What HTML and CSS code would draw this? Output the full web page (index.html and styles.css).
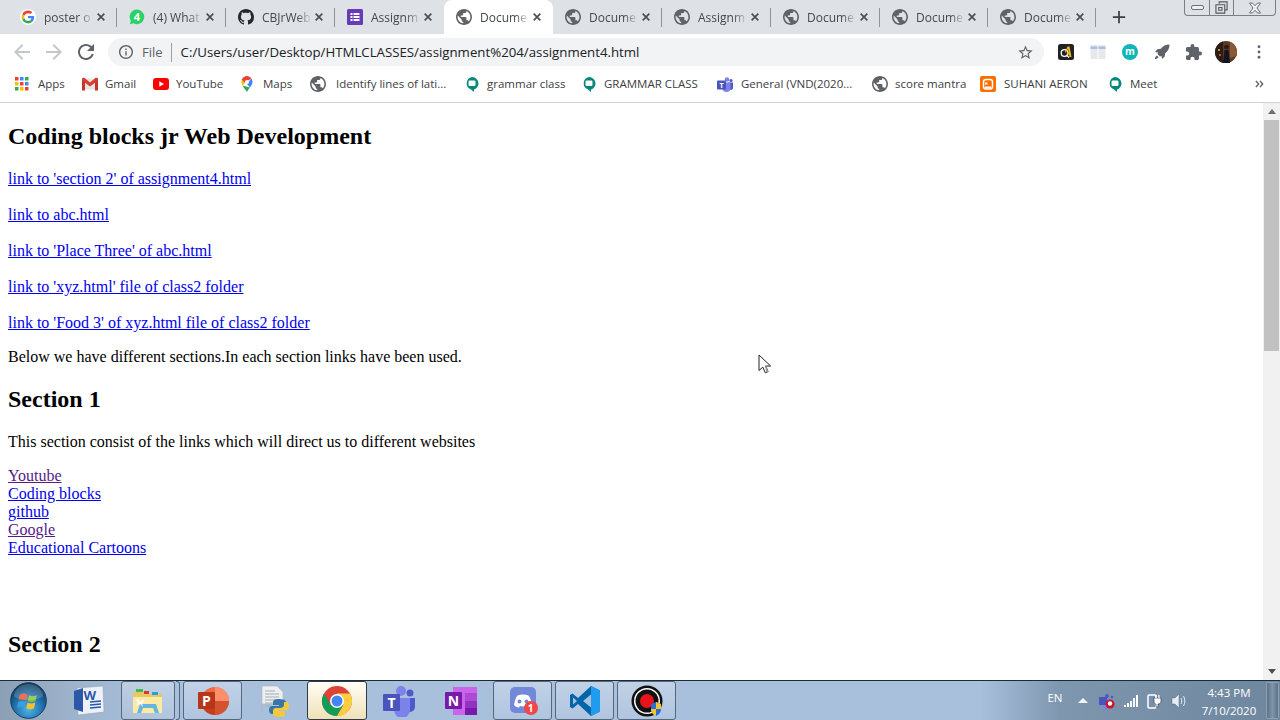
FILE: index.html
```html
<!DOCTYPE html>
<html lang="en">
<head>
<meta charset="utf-8">
<title>Document</title>
<link rel="stylesheet" href="styles.css">
</head>
<body>
<svg class="defs" aria-hidden="true">
  <symbol id="globe" viewBox="2 2 20 20"><path fill="#5f6368" d="M12 2C6.48 2 2 6.48 2 12s4.480 10 10 10 10-4.480 10-10S17.520 2 12 2zm-1 17.930c-3.950-.490-7-3.850-7-7.930 0-.620.080-1.210.210-1.790L9 15v1c0 1.100.900 2 2 2v1.930zm6.900-2.540c-.260-.810-1-1.390-1.900-1.390h-1v-3c0-.550-.450-1-1-1H8v-2h2c.550 0 1-.450 1-1V7h2c1.100 0 2-.900 2-2v-.410c2.930 1.190 5 4.060 5 7.410 0 2.080-.800 3.970-2.100 5.390z"/></symbol>
  <symbol id="close" viewBox="0 0 12 12"><path stroke="#4a4d52" stroke-width="2" d="M2 2l8 8M10 2l-8 8"/></symbol>
  <symbol id="meet" viewBox="0 0 16 16"><path fill="#00897b" d="M7 1a6.500 6.500 0 0 1 6.500 6.500c0 3-2 5.300-4.500 6V16l-3-2.500A6.500 6.500 0 0 1 7 1z"/><rect x="3.500" y="4.500" width="7" height="5.500" rx="1.200" fill="#fff"/></symbol>
</svg>

<header class="tabstrip">
  <div class="tab">
    <svg class="favicon" viewBox="-6 -6 60 60"><circle cx="24" cy="24" r="30" fill="#fff"/><path fill="#EA4335" d="M24 9.500c3.540 0 6.710 1.220 9.210 3.600l6.850-6.850C35.900 2.380 30.470 0 24 0 14.620 0 6.510 5.380 2.560 13.220l7.980 6.190C12.430 13.720 17.740 9.500 24 9.500z"/><path fill="#4285F4" d="M46.980 24.550c0-1.570-.150-3.090-.380-4.550H24v9.020h12.940c-.580 2.960-2.260 5.480-4.780 7.180l7.730 6c4.510-4.180 7.090-10.360 7.090-17.650z"/><path fill="#FBBC05" d="M10.530 28.590c-.500-1.450-.760-2.990-.760-4.590s.270-3.140.760-4.590l-7.980-6.190C.920 16.460 0 20.120 0 24c0 3.880.920 7.540 2.560 10.780l7.970-6.190z"/><path fill="#34A853" d="M24 48c6.480 0 11.930-2.130 15.890-5.810l-7.730-6c-2.150 1.450-4.920 2.300-8.160 2.300-6.260 0-11.570-4.220-13.470-9.910l-7.980 6.190C6.510 42.620 14.620 48 24 48z"/></svg>
    <span class="tab-title">poster o</span>
    <svg class="tab-close"><use href="#close"/></svg>
  </div>
  <div class="tab">
    <svg class="favicon" viewBox="0 0 16 16"><path fill="#25d366" d="M8 .500a7.300 7.300 0 1 1-3.600 13.700L.800 15.300l1.100-3.500A7.300 7.300 0 0 1 8 .500z"/><text x="8" y="12" class="badge-digit">4</text></svg>
    <span class="tab-title">(4) What</span>
    <svg class="tab-close"><use href="#close"/></svg>
  </div>
  <div class="tab">
    <svg class="favicon" viewBox="0 0 16 16"><path fill="#24292e" d="M8 0C3.580 0 0 3.580 0 8c0 3.540 2.290 6.530 5.470 7.590.400.070.550-.170.550-.380 0-.190-.010-.820-.010-1.490-2.010.370-2.530-.490-2.690-.940-.090-.230-.480-.940-.820-1.130-.280-.150-.680-.520-.010-.530.630-.010 1.080.580 1.230.820.720 1.210 1.870.870 2.330.660.070-.520.280-.870.510-1.070-1.780-.200-3.640-.890-3.640-3.950 0-.870.310-1.590.820-2.150-.080-.200-.360-1.020.080-2.120 0 0 .670-.210 2.200.820.640-.180 1.320-.270 2-.270.680 0 1.360.090 2 .270 1.530-1.040 2.200-.820 2.200-.820.440 1.100.160 1.920.080 2.120.510.560.820 1.270.820 2.150 0 3.070-1.870 3.750-3.650 3.950.290.250.540.730.540 1.480 0 1.070-.010 1.930-.010 2.200 0 .210.150.460.550.380A8.013 8.013 0 0 0 16 8c0-4.420-3.580-8-8-8z"/></svg>
    <span class="tab-title">CBJrWeb</span>
    <svg class="tab-close"><use href="#close"/></svg>
  </div>
  <div class="tab">
    <svg class="favicon" viewBox="0 0 16 16"><rect width="16" height="16" rx="1.500" fill="#673ab7"/><path fill="#fff" d="M3.500 4h2v2h-2zM6.500 4h6v2h-6zM3.500 7h2v2h-2zM6.500 7h6v2h-6zM3.500 10h2v2h-2zM6.500 10h6v2h-6z"/></svg>
    <span class="tab-title">Assignm</span>
    <svg class="tab-close"><use href="#close"/></svg>
  </div>
  <div class="tab tab-active">
    <svg class="favicon"><use href="#globe"/></svg>
    <span class="tab-title">Docume</span>
    <svg class="tab-close"><use href="#close"/></svg>
  </div>
  <div class="tab">
    <svg class="favicon"><use href="#globe"/></svg>
    <span class="tab-title">Docume</span>
    <svg class="tab-close"><use href="#close"/></svg>
  </div>
  <div class="tab">
    <svg class="favicon"><use href="#globe"/></svg>
    <span class="tab-title">Assignm</span>
    <svg class="tab-close"><use href="#close"/></svg>
  </div>
  <div class="tab">
    <svg class="favicon"><use href="#globe"/></svg>
    <span class="tab-title">Docume</span>
    <svg class="tab-close"><use href="#close"/></svg>
  </div>
  <div class="tab">
    <svg class="favicon"><use href="#globe"/></svg>
    <span class="tab-title">Docume</span>
    <svg class="tab-close"><use href="#close"/></svg>
  </div>
  <div class="tab">
    <svg class="favicon"><use href="#globe"/></svg>
    <span class="tab-title">Docume</span>
    <svg class="tab-close"><use href="#close"/></svg>
  </div>
  <svg class="new-tab" viewBox="0 0 16 16"><path stroke="#3c4043" stroke-width="2" d="M8 1v14M1 8h14"/></svg>
  <div class="win-controls">
    <div class="win-btn win-min"><span class="min-glyph"></span></div>
    <div class="win-btn win-max">
      <svg class="win-glyph" viewBox="0 0 14 14"><path fill="none" stroke="#55585c" stroke-width="1.200" d="M4.500 3V1h8.500v8.500h-2.500M1 4h9.500v9H1zM4 7h3.500v3H4z"/></svg>
    </div>
    <div class="win-btn win-close">
      <svg class="win-glyph-x" viewBox="0 0 14 12"><path fill="#eef0f2" stroke="#6d7074" d="M1.500 1H4.500L7 3.700 9.500 1h3L9 6l3.500 5h-3L7 8.300 4.500 11h-3L5 6z"/></svg>
    </div>
  </div>
</header>

<nav class="toolbar">
  <svg class="tool-btn" viewBox="0 0 24 24"><path fill="#c4c7cb" d="M20 11H7.830l5.590-5.590L12 4l-8 8 8 8 1.410-1.410L7.830 13H20v-2z"/></svg>
  <svg class="tool-btn" viewBox="0 0 24 24"><path fill="#c4c7cb" d="M4 11h12.170l-5.590-5.590L12 4l8 8-8 8-1.410-1.410L16.170 13H4v-2z"/></svg>
  <svg class="tool-btn" viewBox="0 0 24 24"><path fill="#5f6368" d="M17.650 6.350C16.200 4.900 14.210 4 12 4c-4.420 0-7.990 3.580-7.990 8s3.570 8 7.990 8c3.730 0 6.840-2.550 7.730-6h-2.080c-.820 2.330-3.040 4-5.650 4-3.310 0-6-2.690-6-6s2.690-6 6-6c1.660 0 3.140.690 4.220 1.780L13 11h7V4l-2.350 2.350z"/></svg>
  <div class="omnibox">
    <svg class="info" viewBox="2 2 20 20"><path fill="#5f6368" d="M11 7h2v2h-2zm0 4h2v6h-2zm1-9C6.480 2 2 6.480 2 12s4.480 10 10 10 10-4.480 10-10S17.520 2 12 2zm0 18c-4.410 0-8-3.590-8-8s3.590-8 8-8 8 3.590 8 8-3.590 8-8 8z"/></svg>
    <span class="scheme">File</span>
    <span class="omni-sep"></span>
    <span class="url">C:/Users/user/Desktop/HTMLCLASSES/assignment%204/assignment4.html</span>
    <svg class="star" viewBox="0 0 24 24"><path fill="#5f6368" d="M22 9.240l-7.190-.620L12 2 9.190 8.630 2 9.240l5.460 4.730L5.820 21 12 17.270 18.180 21l-1.630-7.030L22 9.240zM12 15.400l-3.760 2.270 1-4.280-3.320-2.880 4.380-.380L12 6.100l1.710 4.040 4.380.380-3.320 2.880 1 4.280L12 15.400z"/></svg>
  </div>
  <div class="extensions">
    <svg class="ext" viewBox="0 0 16 16"><rect width="16" height="16" rx="2.500" fill="#1f2326"/><circle cx="6.500" cy="9" r="3.300" fill="none" stroke="#fff" stroke-width="1.300"/><path fill="#f5b81f" d="M9.500 2.500h2l2 10.500h-2l-.4-2.500H8.500l.6-2h1.600L10 4.500 7.800 9 7 7.500z"/><path stroke="#fff" stroke-width="1.300" d="M9 11.500l2 2"/></svg>
    <svg class="ext" viewBox="0 0 16 16"><rect x=".500" y="1" width="7" height="14" fill="#e6e8eb"/><rect x="8.500" y="1" width="7" height="14" fill="#e6e8eb"/><rect x=".500" y="2.500" width="7" height="2.500" fill="#a9bfe0"/><rect x="8.500" y="2.500" width="7" height="2.500" fill="#a9bfe0"/></svg>
    <svg class="ext" viewBox="0 0 16 16"><circle cx="8" cy="8" r="8" fill="#0fb5b7"/><text x="8" y="11" class="ext-m">m</text></svg>
    <svg class="ext" viewBox="0 0 16 16"><path fill="#5f6368" d="M15.500.500c-3.800 0-6.600 1.500-8.700 4.300L3.400 5.300 1 8l3.200.500-.7 1.500 2.500 2.500 1.500-.700L8 15l2.700-2.400.500-3.400c2.800-2.100 4.300-4.900 4.300-8.700zM3 11.500C1.800 12 1 13.500.800 15.200 2.500 15 4 14.200 4.500 13z"/></svg>
    <svg class="ext" viewBox="2 1 21 21"><path fill="#5f6368" d="M20.500 11H19V7c0-1.100-.900-2-2-2h-4V3.500C13 2.120 11.880 1 10.500 1S8 2.120 8 3.500V5H4c-1.100 0-1.990.900-1.990 2v3.800H3.500c1.490 0 2.700 1.210 2.700 2.700s-1.210 2.700-2.700 2.700H2V20c0 1.100.900 2 2 2h3.800v-1.500c0-1.490 1.210-2.700 2.700-2.700 1.490 0 2.700 1.210 2.700 2.700V22H17c1.100 0 2-.900 2-2v-4h1.500c1.380 0 2.500-1.120 2.500-2.500S21.880 11 20.500 11z"/></svg>
    <svg class="avatar" viewBox="0 0 22 22"><circle cx="11" cy="11" r="11" fill="#5b3a26"/><path fill="#2b1c14" d="M0 11A11 11 0 0 1 8 .500V22A11 11 0 0 1 0 11z"/><path fill="#8a5a34" d="M15 1a11 11 0 0 1 7 10v4l-7 2z"/><path fill="#14161f" d="M8 22l1.500-13h4L15 22z"/><circle cx="11.500" cy="6" r="2.300" fill="#2a1a12"/><circle cx="4" cy="9" r="1" fill="#d0c060"/><circle cx="5" cy="14" r="1" fill="#c07050"/></svg>
    <svg class="dots" viewBox="0 0 4 16"><circle cx="2" cy="2" r="1.600" fill="#5f6368"/><circle cx="2" cy="8" r="1.600" fill="#5f6368"/><circle cx="2" cy="14" r="1.600" fill="#5f6368"/></svg>
  </div>
</nav>

<nav class="bookmarks">
  <a class="bm">
    <svg class="bm-icon bm-apps" viewBox="0 0 14 14"><path fill="#ea4335" d="M0 0h3.500v3.500H0z"/><path fill="#4285f4" d="M5 0h3.500v3.500H5z"/><path fill="#34a853" d="M10 0h3.500v3.500H10z"/><path fill="#fbbc05" d="M0 5h3.500v3.500H0z"/><path fill="#ea4335" d="M5 5h3.500v3.500H5z"/><path fill="#4285f4" d="M10 5h3.500v3.500H10z"/><path fill="#34a853" d="M0 10h3.500v3.500H0z"/><path fill="#fbbc05" d="M5 10h3.500v3.500H5z"/><path fill="#ea4335" d="M10 10h3.500v3.500H10z"/></svg>
    <span>Apps</span>
  </a>
  <a class="bm">
    <svg class="bm-icon" viewBox="0 0 16 13"><path fill="#e5e5e5" d="M1 1h14v11H1z"/><path fill="#c5352b" d="M0 1h3v12H0zM13 1h3v12h-3z"/><path fill="#d93c30" d="M0 1l2-1 6 5 6-5 2 1v2L8 9 0 3z"/></svg>
    <span>Gmail</span>
  </a>
  <a class="bm">
    <svg class="bm-icon" viewBox="0 0 16 12"><rect width="16" height="12" rx="3" fill="#f00"/><path fill="#fff" d="M6.300 3.300L11 6l-4.700 2.700z"/></svg>
    <span>YouTube</span>
  </a>
  <a class="bm">
    <svg class="bm-icon bm-tight" viewBox="2 0 12 16"><path fill="#34a853" d="M1.200 9.500L6 16c.900-2 2-3.300 3-4.600z"/><path fill="#fbbc05" d="M.700 4C.200 6 .500 7.600 1.200 9.500L6 5.500z"/><path fill="#4285f4" d="M11.500 6c0-1.300-.500-2.500-1.300-3.500L6 8l3 3.400C10.500 9.500 11.500 8 11.500 6z"/><path fill="#ea4335" d="M6 0C3.800 0 1.800 1.300.700 3.700l3.500 2.800L10.400 2.600C9.300 1 7.800 0 6 0z"/><circle cx="6" cy="6" r="2" fill="#fff"/></svg>
    <span>Maps</span>
  </a>
  <a class="bm">
    <svg class="bm-icon bm-widest"><use href="#globe"/></svg>
    <span>Identify lines of lati...</span>
  </a>
  <a class="bm">
    <svg class="bm-icon bm-tight"><use href="#meet"/></svg>
    <span>grammar class</span>
  </a>
  <a class="bm">
    <svg class="bm-icon bm-tight"><use href="#meet"/></svg>
    <span>GRAMMAR CLASS</span>
  </a>
  <a class="bm">
    <svg class="bm-icon bm-wide" viewBox="0 0 16 16"><circle cx="10" cy="3.500" r="2.300" fill="#7b83eb"/><circle cx="14" cy="4.500" r="1.600" fill="#5059c9"/><path fill="#5059c9" d="M11 6.500h5v5a2.500 2.500 0 0 1-5 0z"/><path fill="#7b83eb" d="M5 6.500h8.500V12a4 4 0 0 1-8 0z"/><rect y="4.500" width="9" height="9" rx="1" fill="#4b53bc"/><text x="4.500" y="12" class="teams-t">T</text></svg>
    <span>General (VND(2020...</span>
  </a>
  <a class="bm">
    <svg class="bm-icon"><use href="#globe"/></svg>
    <span>score mantra</span>
  </a>
  <a class="bm">
    <svg class="bm-icon bm-wide" viewBox="0 0 16 16"><rect width="16" height="16" rx="2" fill="#ff6d00"/><path fill="none" stroke="#fff" stroke-width="2" d="M5 11.500h6M5 7.500h2.500"/><rect x="3.500" y="3.500" width="9" height="9.500" rx="2.500" fill="none" stroke="#fff" stroke-width="1.500"/></svg>
    <span>SUHANI AERON</span>
  </a>
  <a class="bm">
    <svg class="bm-icon bm-tight"><use href="#meet"/></svg>
    <span>Meet</span>
  </a>
  <svg class="bm-more" viewBox="0 0 10 8"><path fill="none" stroke="#5f6368" stroke-width="1.600" d="M1 .500L4 4 1 7.500M5.500 .500L8.500 4l-3 3.500"/></svg>
</nav>

<div class="viewport">
  <main class="page">
    <h2>Coding blocks jr Web Development</h2>
    <p class="link-row"><a class="link" href="#s2">link to 'section 2' of assignment4.html</a></p>
    <p class="link-row"><a class="link" href="#abc">link to abc.html</a></p>
    <p class="link-row"><a class="link" href="#three">link to 'Place Three' of abc.html</a></p>
    <p class="link-row"><a class="link" href="#xyz">link to 'xyz.html' file of class2 folder</a></p>
    <p class="link-row"><a class="link" href="#food">link to 'Food 3' of xyz.html file of class2 folder</a></p>
    <p>Below we have different sections.In each section links have been used.</p>
    <h2>Section 1</h2>
    <p>This section consist of the links which will direct us to different websites</p>
    <div class="link-list">
      <a class="link visited" href="#yt">Youtube</a>
      <a class="link" href="#cb">Coding blocks</a>
      <a class="link" href="#gh">github</a>
      <a class="link visited" href="#g">Google</a>
      <a class="link" href="#ec">Educational Cartoons</a>
    </div>
    <h2 class="section-two">Section 2</h2>
  </main>
  <aside class="scrollbar">
    <span class="arrow-up"></span>
    <span class="thumb"></span>
    <span class="arrow-down"></span>
  </aside>
  <svg class="cursor" viewBox="0 0 13 20"><path fill="#fff" stroke="#222" d="M1 1v15.500l3.800-3.400 2.500 5.700 2.800-1.200-2.500-5.600h5z"/><path fill="#9a9a9a" d="M7 12.500h2.500l-1 1.300 1.800 3.700-1.700.7z"/></svg>
</div>

<footer class="taskbar">
  <div class="start">
    <svg class="orb" viewBox="0 0 38 38">
      <defs><radialGradient id="orbg" cx=".5" cy=".75" r=".7"><stop offset="0" stop-color="#4fb3e8"/><stop offset=".6" stop-color="#1c6ca8"/><stop offset="1" stop-color="#0e3a5e"/></radialGradient></defs>
      <circle cx="19" cy="19" r="18.300" fill="url(#orbg)" stroke="#1a3a55"/>
      <path fill="#e8552b" d="M10 13c3-1.500 5.500-1.500 8 0l-1.300 6c-2.500-1.300-5-1.300-8 0z"/>
      <path fill="#86c23c" d="M19.500 13.500c2.500 1.500 5 1.500 8 0l-1.300 6c-3 1.500-5.500 1.500-8 0z"/>
      <path fill="#3a9ee0" d="M8.500 20.500c3-1.300 5.500-1.300 8 0l-1.300 6c-2.500-1.500-5-1.500-8 0z"/>
      <path fill="#f5c22c" d="M18 21c2.500 1.500 5 1.500 8 0l-1.300 6c-3 1.500-5.500 1.500-8 0z"/>
      <path fill="#fff" opacity=".18" d="M4 15a15 13 0 0 1 30 0c-8 5-22 5-30 0z"/>
    </svg>
  </div>
  <div class="tb">
    <svg class="tb-icon" viewBox="0 0 32 32"><path fill="#eef2f8" stroke="#8ea2c0" stroke-width=".6" d="M4 3l26-2 1 26-26 3z"/><path fill="#2b58a8" d="M1 6l9-3v24l-9-3z"/><path stroke="#2b58a8" stroke-width="1.500" d="M17 17l11-1M17 20l11-1M17 23l11-1"/><text x="10.500" y="14.500" class="word-w">W</text></svg>
  </div>
  <div class="tb tb-framed tb-stack">
    <svg class="tb-icon" viewBox="0 0 32 32"><path fill="#e8c66a" d="M1 7h12l2 2h15v19H1z"/><rect x="4" y="4" width="7" height="3" fill="#3dbb4a"/><rect x="12" y="6" width="5" height="3" fill="#d8392b"/><rect x="20" y="7" width="6" height="3" fill="#2a9fd6"/><path fill="#fbe9a6" d="M1 12h29v16H1z"/><path fill="#66b5de" d="M8 19h16l3 9h-4l-2-5H11l-2 5H5z"/><path fill="#fff" opacity=".8" d="M6 12l2 5 2-2 3 1-3 2 1 4-3-3-4 2 2-4-3-2 3-1z"/></svg>
    <span class="stack-edge"></span>
  </div>
  <div class="tb tb-framed">
    <svg class="tb-icon" viewBox="0 0 32 32"><circle cx="18" cy="16" r="14" fill="#ed6c47"/><path fill="#ff8f6b" d="M18 2a14 14 0 0 1 14 14H18z"/><path fill="#d35230" d="M32 16a14 14 0 0 1-14 14V16z"/><path fill="#c43e1c" d="M18 16v14a14 14 0 0 1-12-7V16z"/><rect x="1" y="7" width="17" height="17" rx="1" fill="#b7361a"/><text x="9.500" y="20.500" class="ppt-p">P</text></svg>
  </div>
  <div class="tb">
    <svg class="tb-icon" viewBox="0 0 32 32"><path fill="#eceff1" stroke="#b0b4b8" stroke-width=".6" d="M3 1h15l6 6v12H3v9z"/><path stroke="#a9adb1" d="M6 6h10M6 9h14M6 12h14M6 15h14M6 18h8M6 21h6"/><path fill="#3a75a8" d="M19 14c-3 0-5 1-5 3v3h6v1h-7c-2 0-3 2-3 4s1 4 3 4h2v-3c0-2 2-3 4-3h5c2 0 3-1 3-3v-3c0-2-3-3-8-3z"/><path fill="#f5c93a" d="M21 32c3 0 5-1 5-3v-3h-6v-1h7c2 0 3-2 3-4s-1-4-3-4h-2v3c0 2-2 3-4 3h-4c-2 0-3 1-3 3v3c0 2 2 3 7 3z"/></svg>
  </div>
  <div class="tb tb-active">
    <svg class="tb-icon" viewBox="0 0 32 32"><circle cx="16" cy="16" r="15" fill="#db4437"/><path fill="#0f9d58" d="M3 8.500A15 15 0 0 0 16 31l6.500-11.300H9.500z"/><path fill="#ffcd40" d="M16 31a15 15 0 0 0 13-22.500H16l6.500 11.200z"/><circle cx="16" cy="16" r="7" fill="#fff"/><circle cx="16" cy="16" r="5.500" fill="#4285f4"/></svg>
  </div>
  <div class="tb">
    <svg class="tb-icon" viewBox="0 0 32 32"><circle cx="18" cy="6" r="5" fill="#7b83eb"/><circle cx="27" cy="8" r="3.500" fill="#5059c9"/><path fill="#5059c9" d="M22 13h10v9a5 5 0 0 1-10 0z"/><path fill="#7b83eb" d="M11 13h16v12a8 8 0 0 1-16 0z"/><rect y="9" width="17" height="17" rx="1" fill="#4b53bc"/><text x="8.500" y="22.500" class="tb-letter">T</text></svg>
  </div>
  <div class="tb">
    <svg class="tb-icon" viewBox="0 0 32 32"><rect x="8" y="2" width="24" height="28" fill="#ca64ea"/><rect x="20" y="8" width="12" height="8" fill="#ae4bd5"/><rect x="20" y="16" width="12" height="7" fill="#9332bf"/><rect x="20" y="23" width="12" height="7" fill="#7719aa"/><rect y="7" width="17" height="17" rx="1" fill="#7719aa"/><text x="8.500" y="20.500" class="tb-letter">N</text></svg>
  </div>
  <div class="tb tb-framed">
    <span class="discord-wrap">
      <svg class="tb-icon" viewBox="0 0 32 32"><rect x="3" y="2" width="26" height="26" rx="5" fill="#7289da"/><path fill="#fff" d="M7 20c1-5 2-8 3.500-9.500 3.500-1.500 7.500-1.500 11 0C23 12 24 15 25 20c-1.500 1.500-3 2.200-5 2.500l-1-1.500c-2 .5-4 .5-6 0l-1 1.500c-2-.3-3.500-1-5-2.500z"/><circle cx="12.500" cy="16.500" r="2" fill="#7289da"/><circle cx="19.500" cy="16.500" r="2" fill="#7289da"/></svg>
      <span class="notif">1</span>
    </span>
  </div>
  <div class="tb tb-framed">
    <svg class="tb-icon" viewBox="0 0 32 32"><path fill="#0065a9" d="M22 1l9 4.500v21L22 31 9 19l-5.500 4.500L1 22V10l2.500-1.500L9 13z"/><path fill="#1f9cf0" d="M22 1l9 4.500v21L22 31z"/><path fill="#a9c1dd" d="M4 12.500L8 16l-4 3.500zM22 9.500L14 16l8 6.500z"/></svg>
  </div>
  <div class="tb tb-framed">
    <svg class="tb-icon" viewBox="0 0 32 32"><circle cx="16" cy="16" r="15.500" fill="#111"/><circle cx="16" cy="16" r="13" fill="#fff"/><circle cx="16" cy="16" r="11.500" fill="#111"/><circle cx="16" cy="16" r="7" fill="#e8141c"/><path fill="#2b6fd6" d="M20 19l5-2 5 2v5c0 4-3 6-5 7-2-1-5-3-5-7z"/><path fill="#f5c62c" d="M25 17l5 2v5h-5zM25 24h-5c0 4 3 6 5 7z"/></svg>
  </div>
  <div class="tray">
    <span class="lang">EN</span>
    <span class="tray-item"><span class="tray-up"></span></span>
    <span class="tray-item">
      <svg class="tray-icon" viewBox="0 0 16 16"><circle cx="8" cy="3" r="2" fill="#5059c9"/><circle cx="13" cy="4" r="1.300" fill="#5059c9"/><path fill="#7b83eb" d="M3 6h11v5a5 5 0 0 1-11 0z"/><rect y="4" width="8" height="8" fill="#4b53bc"/><circle cx="11" cy="11" r="4.500" fill="#c4172c"/><circle cx="11" cy="10.500" r="2.200" fill="#fff"/></svg>
    </span>
    <span class="tray-item">
      <svg class="tray-icon" viewBox="0 0 16 16"><path fill="#fff" d="M1 12h2v2H1zM4 10h2v4H4zM7 8h2v6H7zM10 5h2v9h-2zM13 2h2v12h-2z"/></svg>
    </span>
    <span class="tray-item">
      <svg class="tray-icon" viewBox="0 0 16 16"><rect x="1" y="2" width="8" height="13" rx="1" fill="none" stroke="#fff" stroke-width="1.500"/><path fill="#fff" stroke="#263646" stroke-width=".6" d="M7 5h7v3c0 2-1 3-3 3v3H9v-3c-1.500 0-2-1-2-3z"/><path stroke="#fff" stroke-width="1.200" d="M9 2v3M12 2v3"/></svg>
    </span>
    <span class="tray-item">
      <svg class="tray-icon" viewBox="0 0 16 16"><path fill="#e8edf2" stroke="#5c6e80" stroke-width=".5" d="M1 5h3l4-4v14l-4-4H1z"/><path fill="none" stroke="#e8edf2" d="M10 5c1 2 1 4 0 6M12.500 3c1.800 3 1.800 7 0 10"/></svg>
    </span>
    <div class="clock">
      <span>4:43 PM</span>
      <span>7/10/2020</span>
    </div>
    <span class="show-desktop"></span>
  </div>
</footer>
</body>
</html>
```

FILE: styles.css
```css
* { box-sizing: border-box; }

html, body {
  margin: 0;
  height: 100%;
  overflow: hidden;
}

body {
  display: flex;
  flex-direction: column;
  width: 1280px;
  height: 720px;
  background: #fff;
  font-family: "Open Sans", "Noto Sans", "Liberation Sans", sans-serif;
}

svg { display: block; flex: none; }

.defs { width: 0; height: 0; position: absolute; }

/* Tab strip */
.tabstrip {
  display: flex;
  align-items: stretch;
  height: 34px;
  padding-left: 8px;
  background: #dee1e6;
  flex: none;
}

.tab {
  position: relative;
  display: flex;
  align-items: center;
  width: 109px;
  padding: 0 9px 0 12px;
  color: #45484c;
  font-size: 12px;
}

.tab:nth-child(n+9) { width: 108px; }

.tab::after {
  content: "";
  position: absolute;
  right: 0;
  top: 8px;
  height: 19px;
  width: 1px;
  background: #8f9296;
}

.tab:nth-child(4)::after,
.tab-active::after { display: none; }

.tab-active {
  background: #fff;
  border-radius: 8px 8px 0 0;
}

.favicon { width: 16px; height: 16px; }

.tab-title {
  flex: 1;
  min-width: 0;
  margin: 0 2px 0 8px;
  white-space: nowrap;
  -webkit-mask-image: linear-gradient(90deg, #000 70%, transparent 100%);
  mask-image: linear-gradient(90deg, #000 70%, transparent 100%);
}

.tab-close { width: 10px; height: 10px; margin-right: 2px; }

.badge-digit {
  font: 700 11px "Open Sans", sans-serif;
  fill: #fff;
  text-anchor: middle;
}

.new-tab { width: 14px; height: 14px; margin: 10px 0 0 16px; }

.win-controls {
  display: flex;
  height: 16px;
  margin-left: auto;
  margin-right: 4px;
  border: 1px solid #7b7e83;
  border-top: 0;
  border-radius: 0 0 4px 4px;
}

.win-btn {
  display: flex;
  align-items: center;
  justify-content: center;
  border-left: 1px solid #7b7e83;
}

.win-min { width: 24px; border-left: 0; }
.win-max { width: 24px; }
.win-close { width: 42px; }

.min-glyph {
  width: 13px;
  height: 5px;
  border: 1px solid #6d7074;
  border-radius: 2px;
  background: #eef0f2;
}

.win-glyph { width: 13px; height: 13px; }
.win-glyph-x { width: 14px; height: 12px; }

/* Toolbar */
.toolbar {
  display: flex;
  align-items: center;
  height: 34px;
  padding: 2px 0 0 10px;
  background: #fff;
  flex: none;
}

.tool-btn { width: 24px; height: 24px; margin-right: 8px; }
.tool-btn:nth-child(3) { margin-right: 10px; }

.omnibox {
  display: flex;
  align-items: center;
  width: 936px;
  height: 28px;
  padding: 0 10px 0 11px;
  background: #f1f3f4;
  border-radius: 14px;
  color: #202124;
  font-size: 14px;
}

.info { width: 14px; height: 14px; }

.scheme { margin-left: 9px; color: #5f6368; font-size: 13px; }

.omni-sep {
  width: 1px;
  height: 19px;
  margin: 0 9px 0 8px;
  background: #9aa0a6;
}

.url { flex: 1; white-space: nowrap; font-size: 13.25px; }

.star { width: 17px; height: 17px; }

.extensions {
  display: flex;
  align-items: center;
  padding-left: 14px;
}

.ext { width: 16px; height: 16px; margin-right: 16px; }

.avatar { width: 22px; height: 22px; margin-left: -3px; }

.dots { width: 4px; height: 14px; margin-left: 20px; }

.ext-m {
  font: 700 10px "Open Sans", sans-serif;
  fill: #fff;
  text-anchor: middle;
}

/* Bookmarks */
.bookmarks {
  display: grid;
  grid-template-columns: 67px 71px 88px 69px 155px 117px 135px 155px 108px 128px 140px 1fr;
  align-items: center;
  height: 35px;
  padding: 0 16px 3px 15px;
  background: #fff;
  border-bottom: 1px solid #d0d2d5;
  flex: none;
}

.bm {
  display: flex;
  align-items: center;
  color: #3c4043;
  font-size: 11.5px;
  white-space: nowrap;
}

.bm-icon { width: 16px; height: 16px; margin-right: 7px; }
.bm-apps { width: 14px; height: 14px; margin-right: 9px; }
.bm-tight { margin-right: 6px; }
.bm-wide { margin-right: 8px; }
.bm-widest { margin-right: 10px; }

.bm-more { width: 9px; height: 8px; justify-self: end; }

.teams-t {
  font: 700 7px "Open Sans", sans-serif;
  fill: #fff;
  text-anchor: middle;
}

/* Page */
.viewport {
  position: relative;
  display: flex;
  flex: 1;
  min-height: 0;
}

.page {
  flex: 1;
  min-width: 0;
  padding: 0 8px;
  overflow: hidden;
  background: #fff;
  color: #000;
  font-family: "Liberation Serif", "Times New Roman", serif;
  font-size: 16px;
  line-height: 18px;
}

.page h2 {
  margin: 19.92px 0;
  font-size: 24px;
  line-height: 27px;
  font-weight: 700;
}

.page p { margin: 16px 0; }

.page .link-row { margin: 18px 0 0; }

.link { color: #00e; text-decoration: underline; }
.visited { color: #551a8b; }

.link-list {
  display: flex;
  flex-direction: column;
  align-items: flex-start;
}

.page .section-two { margin-top: 74px; }

.scrollbar {
  position: relative;
  display: flex;
  flex-direction: column;
  align-items: center;
  width: 17px;
  background: #f1f1f1;
}

.arrow-up {
  width: 0;
  height: 0;
  margin-top: 6px;
  border: 4px solid transparent;
  border-top: 0;
  border-bottom: 5px solid #6e6e6e;
}

.thumb {
  width: 15px;
  height: 231px;
  margin-top: 6px;
  background: #c1c1c1;
}

.arrow-down {
  width: 0;
  height: 0;
  margin-top: auto;
  margin-bottom: 6px;
  border: 4px solid transparent;
  border-bottom: 0;
  border-top: 5px solid #4f4f4f;
}

.cursor {
  position: absolute;
  left: 758px;
  top: 251px;
  width: 13px;
  height: 20px;
}

/* Taskbar */
.taskbar {
  display: flex;
  align-items: stretch;
  height: 40px;
  border-top: 1px solid #1d2a38;
  background: linear-gradient(90deg, #8ba0b5 0, #9db3cb 70px, #a9c0dd 160px, #a9c0dd 980px, #7e96ae 1060px, #6e879f 1280px);
  flex: none;
}

.start {
  display: flex;
  align-items: center;
  justify-content: center;
  width: 57px;
  margin-right: 2px;
}

.orb { width: 37px; height: 37px; }

.tb {
  position: relative;
  display: flex;
  align-items: center;
  justify-content: center;
  width: 59px;
  margin-right: 3px;
  border: 1px solid transparent;
  border-radius: 3px;
}

.tb-framed {
  border-color: #55677c;
  background: linear-gradient(180deg, rgba(255,255,255,.28), rgba(255,255,255,.08));
}

.tb-stack {
  width: 54px;
  margin-right: 8px;
}

.stack-edge {
  position: absolute;
  top: -1px;
  bottom: -1px;
  right: -6px;
  width: 4px;
  border: 1px solid #55677c;
  border-left: 0;
  border-radius: 0 3px 3px 0;
}

.tb-active {
  width: 60px;
  margin-right: 2px;
  border-color: #2f3a46;
  background: linear-gradient(180deg, #fffdf6, #efe1b8);
}

.tb-icon { width: 32px; height: 32px; }

.tb-letter,
.ppt-p {
  font: 700 14px "Open Sans", sans-serif;
  fill: #fff;
  text-anchor: middle;
}

.word-w {
  font: 700 13px "Open Sans", sans-serif;
  fill: #2b58a8;
}

.discord-wrap { position: relative; display: block; }

.notif {
  position: absolute;
  right: 1px;
  bottom: 2px;
  width: 14px;
  height: 14px;
  border-radius: 50%;
  background: #f04747;
  color: #fff;
  font: 700 10px/14px "Open Sans", sans-serif;
  text-align: center;
}

.tray {
  display: flex;
  align-items: center;
  margin-left: auto;
  color: #fff;
  font-size: 11.5px;
}

.lang { width: 28px; padding: 0 4px 6px 0; text-align: center; }

.tray-item {
  display: flex;
  align-items: center;
  justify-content: center;
  width: 24px;
}

.tray-up {
  width: 0;
  height: 0;
  border: 5px solid transparent;
  border-top: 0;
  border-bottom: 5px solid #f2f5f8;
}

.tray-icon { width: 16px; height: 16px; }

.clock {
  display: flex;
  flex-direction: column;
  align-items: center;
  width: 60px;
  margin-left: 8px;
  padding-top: 2px;
  line-height: 18px;
}

.show-desktop {
  align-self: stretch;
  width: 13px;
  margin: 1px 1px 1px 7px;
  border: 1px solid #8ca0b4;
  border-radius: 1px;
  background: linear-gradient(90deg, #5e7288, #8095a9 50%, #5e7288);
}
```
